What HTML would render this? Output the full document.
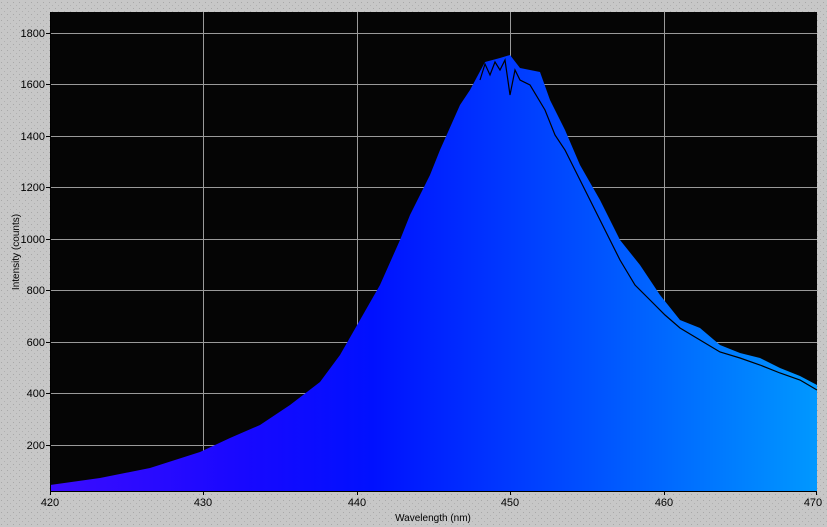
<!DOCTYPE html>
<html><head><style>
html,body{margin:0;padding:0;background:#c7c7c7;}
body{width:827px;height:527px;overflow:hidden;position:relative;font-family:"Liberation Sans",sans-serif;}
</style></head><body>
<svg width="827" height="527" xmlns="http://www.w3.org/2000/svg" style="position:absolute;left:0;top:0">
<defs>
<linearGradient id="g" x1="50" x2="817" y1="0" y2="0" gradientUnits="userSpaceOnUse">
<stop offset="0" stop-color="#3c0cff"/>
<stop offset="0.25" stop-color="#1808ff"/>
<stop offset="0.42" stop-color="#0010ff"/>
<stop offset="0.7" stop-color="#0050ff"/>
<stop offset="1" stop-color="#0098ff"/>
</linearGradient>
<pattern id="dots" width="6" height="6" patternUnits="userSpaceOnUse"><rect width="6" height="6" fill="#c7c7c7"/><rect x="1" y="2" width="1" height="1" fill="#a8a8a8"/><rect x="4" y="5" width="1" height="1" fill="#b0b0b0"/></pattern>
</defs>
<rect width="827" height="527" fill="url(#dots)"/>
<rect x="50" y="12" width="767" height="479" fill="#050505"/>
<g stroke="#9a9a9a" stroke-width="1">
<line x1="203.5" y1="12" x2="203.5" y2="491"/><line x1="357.5" y1="12" x2="357.5" y2="491"/><line x1="510.5" y1="12" x2="510.5" y2="491"/><line x1="664.5" y1="12" x2="664.5" y2="491"/>
<line x1="50" x2="817" y1="445.5" y2="445.5"/><line x1="50" x2="817" y1="393.5" y2="393.5"/><line x1="50" x2="817" y1="342.5" y2="342.5"/><line x1="50" x2="817" y1="290.5" y2="290.5"/><line x1="50" x2="817" y1="239.5" y2="239.5"/><line x1="50" x2="817" y1="187.5" y2="187.5"/><line x1="50" x2="817" y1="136.5" y2="136.5"/><line x1="50" x2="817" y1="84.5" y2="84.5"/><line x1="50" x2="817" y1="33.5" y2="33.5"/>
</g>
<path fill="url(#g)" d="M50,491 L50,485 L100,478 L150,468 L175,460 L200,452 L230,438 L260,425 L290,405 L320,382 L340,355 L360,320 L380,285 L400,240 L410,215 L430,175 L440,150 L460,105 L470,90 L485,62 L500,58 L510,55 L520,68 L540,72 L550,100 L565,130 L580,165 L600,200 L620,240 L640,265 L660,295 L680,320 L700,328 L720,345 L740,353 L760,358 L780,368 L800,376 L817,385 L817,491 Z"/>
<path fill="none" stroke="#000" stroke-width="1.2" d="M480,80 L485,64 L490,75 L495,62 L500,70 L505,60 L510,95 L515,70 L520,80 L530,85 L545,110 L555,135 L565,150 L580,180 L595,210 L605,230 L620,260 L635,285 L650,300 L665,315 L680,328 L700,340 L720,352 L740,358 L760,365 L780,373 L800,380 L817,390"/>
<g stroke="#000" stroke-width="1">
<line x1="50.5" y1="12" x2="50.5" y2="491"/><line x1="50" y1="491.5" x2="817" y2="491.5"/>
</g>
<g stroke="#000"><line x1="46" x2="50" y1="445.5" y2="445.5"/><line x1="46" x2="50" y1="393.5" y2="393.5"/><line x1="46" x2="50" y1="342.5" y2="342.5"/><line x1="46" x2="50" y1="290.5" y2="290.5"/><line x1="46" x2="50" y1="239.5" y2="239.5"/><line x1="46" x2="50" y1="187.5" y2="187.5"/><line x1="46" x2="50" y1="136.5" y2="136.5"/><line x1="46" x2="50" y1="84.5" y2="84.5"/><line x1="46" x2="50" y1="33.5" y2="33.5"/>
<line x1="50.5" x2="50.5" y1="491" y2="495"/><line x1="203.5" x2="203.5" y1="491" y2="495"/><line x1="357.5" x2="357.5" y1="491" y2="495"/><line x1="510.5" x2="510.5" y1="491" y2="495"/><line x1="664.5" x2="664.5" y1="491" y2="495"/><line x1="816.5" x2="816.5" y1="491" y2="495"/></g>
<g font-size="11" fill="#000" text-anchor="end" font-family="Liberation Sans, sans-serif">
<text x="45" y="449">200</text><text x="45" y="397">400</text><text x="45" y="346">600</text><text x="45" y="294">800</text><text x="45" y="243">1000</text><text x="45" y="191">1200</text><text x="45" y="140">1400</text><text x="45" y="88">1600</text><text x="45" y="37">1800</text>
</g>
<g font-size="11" fill="#000" text-anchor="middle" font-family="Liberation Sans, sans-serif">
<text x="50" y="506">420</text><text x="203" y="506">430</text><text x="357" y="506">440</text><text x="510" y="506">450</text><text x="664" y="506">460</text><text x="813" y="506">470</text>
<text x="433" y="521" font-size="10">Wavelength (nm)</text>
<text x="0" y="0" font-size="10" transform="translate(19,252) rotate(-90)">Intensity (counts)</text>
</g>
</svg>
</body></html>
